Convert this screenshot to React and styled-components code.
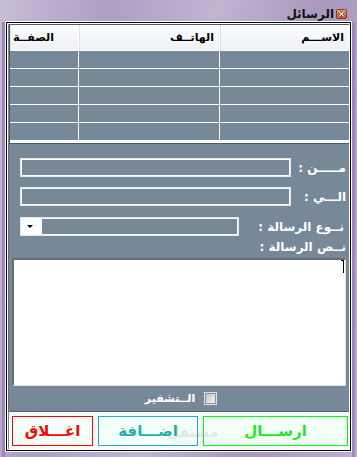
import React from 'react';
import styled, { createGlobalStyle } from 'styled-components';

const GlobalStyle = createGlobalStyle`
  html, body {
    margin: 0;
    padding: 0;
    background: #b9adcb;
  }
  * {
    box-sizing: border-box;
  }
`;

const font = `"DejaVu Sans", "Liberation Sans", sans-serif`;

const Window = styled.div`
  width: 357px;
  height: 457px;
  display: flex;
  flex-direction: column;
  direction: rtl;
  font-family: ${font};
  background:
    linear-gradient(
        to right,
        transparent 0 2px,
        #9c86bd 2px 5px,
        transparent 5px 352px,
        #9c86bd 352px 355px,
        transparent 355px
      )
      0 22px / 100% calc(100% - 22px) no-repeat,
    linear-gradient(
      100deg,
      #c8bdd6 0%,
      #ad9fc3 25%,
      #c0b4d1 50%,
      #a898bd 75%,
      #bcaecd 100%
    );
`;

const TitleBar = styled.div`
  height: 22px;
  display: flex;
  align-items: center;
  gap: 2px;
  padding: 5px 10px 0 0;
`;

const Title = styled.span`
  font-size: 12px;
  font-weight: bold;
  color: #111;
`;

const Client = styled.div`
  margin: 0 6px;
  height: 429px;
  border: 1px solid #000;
  padding: 1px;
  display: flex;
  flex-direction: column;
  background: #778899;
  box-shadow: 0 0 0 1px #fff, inset 0 0 0 1px #fff;
`;

const GridBox = styled.div`
  height: 120px;
  margin-left: 1px;
  border-top: 1px solid #4f5a63;
  border-left: 1px solid #4f5a63;
  border-bottom: 1px solid #4f5a63;
  display: grid;
  grid-template-columns: 129px 140px 1fr;
  grid-template-rows: 25px repeat(5, 17px);
  gap: 1px;
  background: #fff;
  padding-bottom: 2px;
`;

const HeadCell = styled.div`
  background: linear-gradient(#fbfcfd, #eef2f5);
  font-size: 11px;
  font-weight: bold;
  color: #000;
  display: flex;
  align-items: center;
  padding-right: ${p => p.$pad || 5}px;
  border-left: 1px solid #dfe3e7;
`;

const Cell = styled.div`
  background: #778899;
`;

const Form = styled.div`
  height: 267px;
  display: flex;
  flex-direction: column;
  padding: 14px 3px 0 0;
  border-left: 1px solid #5f6b75;
`;

const FieldRow = styled.div`
  height: 19px;
  display: flex;
  align-items: center;
  justify-content: space-between;
  padding-left: 11px;
  margin-bottom: ${p => p.$gap}px;
`;

const Label = styled.span`
  font-size: 12px;
  font-weight: bold;
  color: #fff;
  white-space: nowrap;
  padding-right: ${p => p.$pad || 0}px;
`;

const TextBox = styled.div`
  width: ${p => p.$w}px;
  height: 19px;
  border: 1px solid #e4e8ec;
  box-shadow: inset 0 0 0 1px #fff;
`;

const Combo = styled.div`
  width: 219px;
  height: 19px;
  border: 1px solid #e4e8ec;
  box-shadow: inset 0 0 0 1px #fff;
  display: flex;
  flex-direction: row-reverse;
`;

const ComboButton = styled.div`
  width: 21px;
  height: 100%;
  background: #fff;
  display: flex;
  align-items: center;
  justify-content: center;
  padding-right: 4px;
`;

const Arrow = styled.span`
  width: 0;
  height: 0;
  border-left: 3px solid transparent;
  border-right: 3px solid transparent;
  border-top: 3px solid #000;
`;

const MessageLabel = styled(Label)`
  height: 19px;
  line-height: 19px;
  margin: 2px 0 1px;
`;

const TextArea = styled.div`
  height: 128px;
  margin: 0 0 0 3px;
  background: #fff;
  border-top: 2px solid #6d6d6d;
  border-left: 2px solid #6d6d6d;
  border-right: 1px solid #e0e0e0;
  border-bottom: 1px solid #e0e0e0;
  padding: 0 1px 0 0;
`;

const Caret = styled.span`
  display: block;
  width: 3px;
  height: 13px;
  border-top: 1px solid #000;
  border-right: 1px solid #000;
`;

const CheckRow = styled.div`
  height: 24px;
  display: flex;
  align-items: center;
  justify-content: center;
  gap: 10px;
  padding-left: 6px;
`;

const CheckBox = styled.span`
  width: 11px;
  height: 11px;
  border: 1px solid #8e8e8e;
  background: linear-gradient(135deg, #bfc3c7, #f4f4f4);
  box-shadow: 0 0 0 1px #dde2e6;
`;

const CheckLabel = styled.span`
  font-size: 11px;
  font-weight: bold;
  color: #fff;
  text-shadow: 0 0 1px #9aa5b0;
`;

const ButtonBar = styled.div`
  position: relative;
  flex: 1;
  margin-left: 1px;
  background: #f4f9f9;
  border-top: 1px solid #59636c;
  display: flex;
  align-items: center;
  gap: 5px;
  padding: 0 1px 0 2px;
`;

const Button = styled.div`
  width: ${p => p.$w}px;
  height: 30px;
  border: 1px solid ${p => p.$border};
  color: ${p => p.$color};
  background: #f5fffa;
  display: flex;
  align-items: center;
  justify-content: center;
  font-size: 15px;
  font-weight: bold;
`;

const Watermark = styled.div`
  position: absolute;
  left: 158px;
  top: 13px;
  display: flex;
  flex-direction: column;
  align-items: center;
  color: rgba(120, 130, 140, 0.2);
  pointer-events: none;
  line-height: 1;
`;

const WatermarkBig = styled.span`
  font-size: 14px;
  font-weight: bold;
`;

const WatermarkSmall = styled.span`
  font-size: 6px;
  direction: ltr;
`;

function FormIcon() {
  return (
    <svg width="11" height="10" viewBox="0 0 11 10">
      <defs>
        <linearGradient id="ic" x1="0" y1="0" x2="0" y2="1">
          <stop offset="0" stopColor="#f0a080" />
          <stop offset="1" stopColor="#c8502c" />
        </linearGradient>
      </defs>
      <rect x="0.5" y="0.5" width="10" height="9" rx="1" fill="url(#ic)" stroke="#8a3a20" />
      <path d="M3.2 2.7 L7.8 7.3 M7.8 2.7 L3.2 7.3" stroke="#5a2a18" strokeWidth="2.4" />
      <path d="M3.2 2.7 L7.8 7.3 M7.8 2.7 L3.2 7.3" stroke="#fff" strokeWidth="1.2" />
    </svg>
  );
}

const rows = [0, 1, 2, 3, 4];

export default function App() {
  return (
    <>
      <GlobalStyle />
      <Window>
        <TitleBar>
          <FormIcon />
          <Title>الرسائل</Title>
        </TitleBar>
        <Client>
          <GridBox>
            <HeadCell>الاســـم</HeadCell>
            <HeadCell>الهاتــف</HeadCell>
            <HeadCell $pad={24}>الصفــة</HeadCell>
            {rows.map(r => (
              <React.Fragment key={r}>
                <Cell />
                <Cell />
                <Cell />
              </React.Fragment>
            ))}
          </GridBox>
          <Form>
            <FieldRow $gap={10}>
              <Label>مـــــن :</Label>
              <TextBox $w={271} />
            </FieldRow>
            <FieldRow $gap={11}>
              <Label>الـــي :</Label>
              <TextBox $w={271} />
            </FieldRow>
            <FieldRow $gap={0}>
              <Label $pad={2}>نــوع الرسالة :</Label>
              <Combo>
                <ComboButton>
                  <Arrow />
                </ComboButton>
              </Combo>
            </FieldRow>
            <MessageLabel>نــص الرسالة :</MessageLabel>
            <TextArea>
              <Caret />
            </TextArea>
            <CheckRow>
              <CheckBox />
              <CheckLabel>الــتشفير</CheckLabel>
            </CheckRow>
          </Form>
          <ButtonBar>
            <Button $w={145} $border="#00ff00" $color="#22e822">
              ارســـال
            </Button>
            <Button $w={100} $border="#2aa8c4" $color="#22b0aa">
              اضـــافة
            </Button>
            <Button $w={81} $border="#ff0000" $color="#ff0000">
              اغـــلاق
            </Button>
            <Watermark>
              <WatermarkBig>مستقل</WatermarkBig>
              <WatermarkSmall>mostaql.com</WatermarkSmall>
            </Watermark>
          </ButtonBar>
        </Client>
      </Window>
    </>
  );
}
